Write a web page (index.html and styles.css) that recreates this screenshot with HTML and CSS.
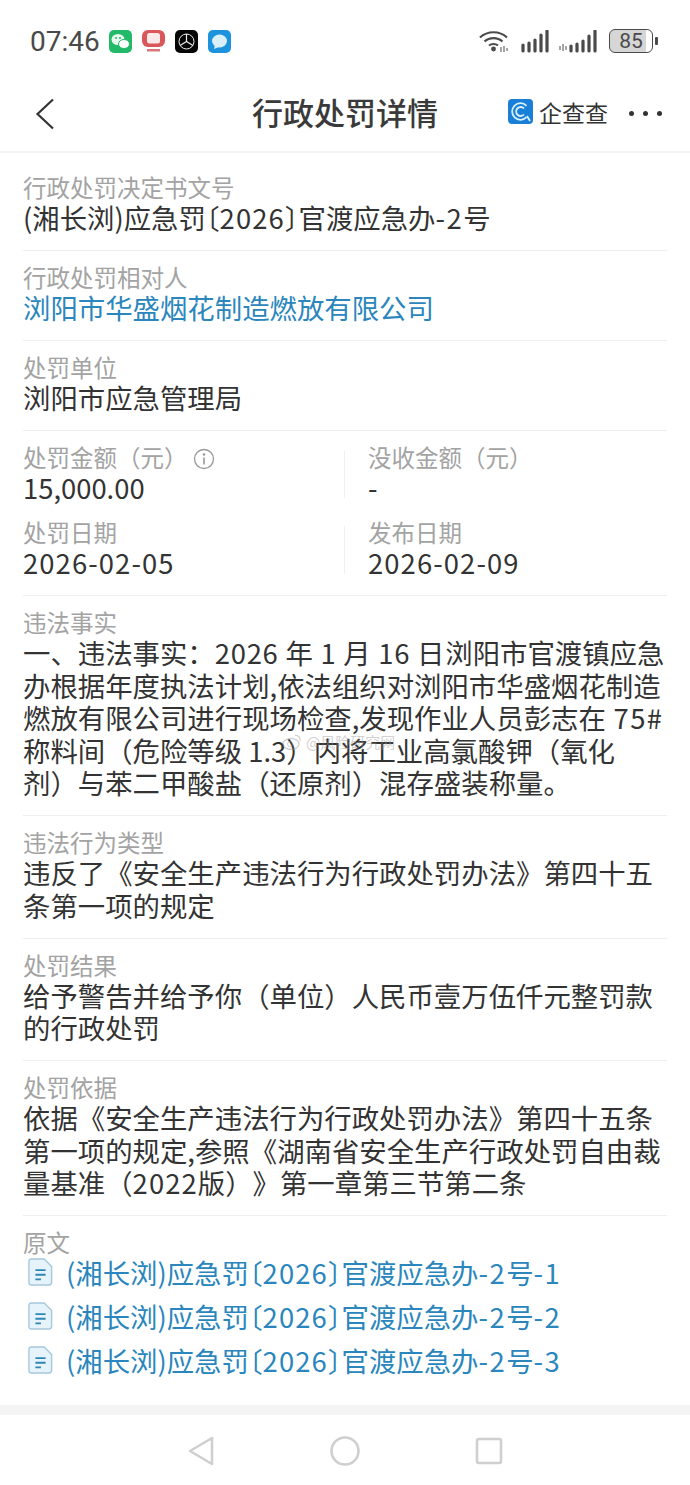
FILE: index.html
```html
<!DOCTYPE html>
<html lang="zh-CN">
<head>
  <meta charset="UTF-8">
  <meta name="viewport" content="width=device-width, initial-scale=1.0">
  <title>行政处罚详情</title>
  <link rel="stylesheet" href="styles.css">
</head>
<body>

<div class="phone">

  <!-- status bar -->
  <div class="status-bar">
    <span class="clock">07:46</span>
    <div class="app-icons">
      <svg class="app-icon" viewBox="0 0 23 23">
        <rect width="23" height="23" rx="5" fill="#22b968"/>
        <ellipse cx="9" cy="9.500" rx="6.500" ry="5.500" fill="#e9f9ef"/>
        <ellipse cx="15" cy="14" rx="5.500" ry="4.500" fill="#ffffff" stroke="#22b968"/>
        <circle cx="7" cy="8" r="1" fill="#22b968"/>
        <circle cx="11" cy="8" r="1" fill="#22b968"/>
      </svg>
      <svg class="app-icon" viewBox="0 0 23 23">
        <rect x="0" y="0" width="23" height="17" rx="6" fill="#d9565a"/>
        <rect x="5" y="3" width="13" height="10.500" rx="2.500" fill="#fbe9e9"/>
        <rect x="5" y="19" width="13" height="2.500" fill="#d9787a"/>
      </svg>
      <svg class="app-icon" viewBox="0 0 23 23">
        <rect width="23" height="23" rx="5" fill="#050505"/>
        <circle cx="11.500" cy="11.500" r="7.500" fill="none" stroke="#eee" stroke-width="1"/>
        <path d="M11.500 4v7.500M11.500 11.500l-6.500 4M11.500 11.500l6.500 4" stroke="#eee" stroke-width="1.200"/>
      </svg>
      <svg class="app-icon" viewBox="0 0 23 23">
        <rect width="23" height="23" rx="5" fill="#1d93de"/>
        <ellipse cx="11.500" cy="11" rx="7.500" ry="6.500" fill="#d9f0fb"/>
        <path d="M7 15l-1 4 5-2z" fill="#d9f0fb"/>
      </svg>
    </div>
    <div class="status-right">
      <svg class="wifi" viewBox="0 0 30 24">
        <path d="M1 8.500C8.500 1.500 20.500 1.500 28 8.500M5.500 12.500C10.500 8 18.500 8 23.500 12.500M10 16.500C12.500 14.500 16.500 14.500 19 16.500" fill="none" stroke="#4a4a4a" stroke-width="2.200"/>
        <circle cx="14.500" cy="20" r="2.400" fill="#4a4a4a"/>
        <path d="M22 18v5M25 17v6M28 19v3" stroke="#4a4a4a" stroke-width="1"/>
      </svg>
      <svg class="signal" viewBox="0 0 29 23">
        <path d="M2 15v6M8 13v8M14 10v11M20 5v16M26 1v20" stroke="#4a4a4a" stroke-width="3.200" stroke-linecap="round"/>
      </svg>
      <svg class="signal-wide" viewBox="0 0 40 23">
        <path d="M1 16v4M4 14v7M7 16v4" stroke="#4a4a4a" stroke-width="1"/>
        <path d="M12 16v5M18 14v7M24 11v10M30 6v15M36 1v20" stroke="#4a4a4a" stroke-width="3.200" stroke-linecap="round"/>
      </svg>
      <div class="battery">
        <div class="battery-body"><span>85</span></div>
        <div class="battery-tip"></div>
      </div>
    </div>
  </div>

  <!-- title bar -->
  <div class="title-bar">
    <svg class="back" viewBox="0 0 20 32">
      <path d="M18 1.500L2.500 16 18 30.500" fill="none" stroke="#333" stroke-width="2.200"/>
    </svg>
    <h1>行政处罚详情</h1>
    <div class="brand">
      <svg class="brand-logo" viewBox="0 0 25 25">
        <rect width="25" height="25" rx="4" fill="#1a7fd6"/>
        <path d="M18.500 6.800A8.300 8.300 0 1 0 18.500 18.200" fill="none" stroke="#d6f1fb" stroke-width="1.800"/>
        <path d="M16 9.500A4.500 4.500 0 1 0 16 15.500" fill="none" stroke="#d6f1fb" stroke-width="1.800"/>
        <path d="M19 17l3 5" stroke="#d6f1fb" stroke-width="1.800"/>
      </svg>
      <span class="brand-name">企查查</span>
    </div>
    <div class="more"><i></i><i></i><i></i></div>
  </div>

  <div class="content">

    <div class="row">
      <div class="label">行政处罚决定书文号</div>
      <div class="value">(湘长浏)应急罚<span class="bracket">〔</span><span class="num">2026</span><span class="bracket">〕</span>官渡应急办<span class="dash">-2</span>号</div>
    </div>

    <div class="row">
      <div class="label">行政处罚相对人</div>
      <div class="value link">浏阳市华盛烟花制造燃放有限公司</div>
    </div>

    <div class="row">
      <div class="label">处罚单位</div>
      <div class="value">浏阳市应急管理局</div>
    </div>

    <div class="row stats">
      <div class="stat">
        <div class="label">处罚金额（元）
          <svg class="info" viewBox="0 0 22 22">
            <circle cx="11" cy="11" r="9.500" fill="none" stroke="#999" stroke-width="1.300"/>
            <circle cx="11" cy="6.500" r="1.300" fill="#999"/>
            <path d="M11 9.500v7" stroke="#999" stroke-width="1.600"/>
          </svg>
        </div>
        <div class="value">15,000.00</div>
      </div>
      <div class="stat">
        <div class="label">没收金额（元）</div>
        <div class="value num">-</div>
      </div>
      <div class="stat">
        <div class="label">处罚日期</div>
        <div class="value num">2026-02-05</div>
      </div>
      <div class="stat">
        <div class="label">发布日期</div>
        <div class="value num">2026-02-09</div>
      </div>
    </div>

    <div class="row">
      <div class="label">违法事实</div>
      <div class="value">一、违法事实：<span class="date">2026 年 1 月 16 日</span>浏阳市官渡镇应急<br>办根据年度执法计划,依法组织对浏阳市华盛烟花制造<br>燃放有限公司进行现场检查,发现作业人员彭志在<span class="code"> 75#</span><br>称料间（危险等级 1.3）内将工业高氯酸钾（氧化<br>剂）与苯二甲酸盐（还原剂）混存盛装称量。</div>
      <div class="watermark">
        <svg class="weibo" viewBox="0 0 20 16">
          <ellipse cx="9" cy="10" rx="8" ry="5.500" fill="none" stroke="currentColor" stroke-width="1.300"/>
          <circle cx="8" cy="10" r="2.500" fill="none" stroke="currentColor"/>
          <path d="M13 1.500c3-.5 6 2 5 5.500" fill="none" stroke="currentColor" stroke-width="1.300"/>
        </svg>
        <span>@风险研究网</span>
      </div>
    </div>

    <div class="row">
      <div class="label">违法行为类型</div>
      <div class="value">违反了《安全生产违法行为行政处罚办法》第四十五<br>条第一项的规定</div>
    </div>

    <div class="row">
      <div class="label">处罚结果</div>
      <div class="value">给予警告并给予你（单位）人民币壹万伍仟元整罚款<br>的行政处罚</div>
    </div>

    <div class="row">
      <div class="label">处罚依据</div>
      <div class="value">依据《安全生产违法行为行政处罚办法》第四十五条<br>第一项的规定,参照《湖南省安全生产行政处罚自由裁<br>量基准（<span class="num">2022</span>版）》第一章第三节第二条</div>
    </div>

    <div class="row last">
      <div class="label">原文</div>
      <div class="docs">
        <div class="doc">
          <svg class="doc-icon" viewBox="0 0 27 30">
            <path d="M3.500 1h14l8 8v17a3 3 0 0 1-3 3h-19a2.500 2.500 0 0 1-2.500-2.500v-23a2.500 2.500 0 0 1 2.500-2.500z" fill="#e6f3fa" stroke="#a6c8dc" stroke-width="1.500"/>
            <path d="M8 13h11M8 18h11M8 23h6" stroke="#2f86b5" stroke-width="2"/>
          </svg>
          <span>(湘长浏)应急罚<span class="bracket">〔</span><span class="num">2026</span><span class="bracket">〕</span>官渡应急办<span class="dash">-2</span>号<span class="dash">-1</span></span>
        </div>
        <div class="doc">
          <svg class="doc-icon" viewBox="0 0 27 30">
            <path d="M3.500 1h14l8 8v17a3 3 0 0 1-3 3h-19a2.500 2.500 0 0 1-2.500-2.500v-23a2.500 2.500 0 0 1 2.500-2.500z" fill="#e6f3fa" stroke="#a6c8dc" stroke-width="1.500"/>
            <path d="M8 13h11M8 18h11M8 23h6" stroke="#2f86b5" stroke-width="2"/>
          </svg>
          <span>(湘长浏)应急罚<span class="bracket">〔</span><span class="num">2026</span><span class="bracket">〕</span>官渡应急办<span class="dash">-2</span>号<span class="dash">-2</span></span>
        </div>
        <div class="doc">
          <svg class="doc-icon" viewBox="0 0 27 30">
            <path d="M3.500 1h14l8 8v17a3 3 0 0 1-3 3h-19a2.500 2.500 0 0 1-2.500-2.500v-23a2.500 2.500 0 0 1 2.500-2.500z" fill="#e6f3fa" stroke="#a6c8dc" stroke-width="1.500"/>
            <path d="M8 13h11M8 18h11M8 23h6" stroke="#2f86b5" stroke-width="2"/>
          </svg>
          <span>(湘长浏)应急罚<span class="bracket">〔</span><span class="num">2026</span><span class="bracket">〕</span>官渡应急办<span class="dash">-2</span>号<span class="dash">-3</span></span>
        </div>
      </div>
    </div>

  </div>

  <div class="band"></div>

  <!-- system navigation -->
  <div class="nav-bar">
    <svg class="nav-icon" viewBox="0 0 30 32">
      <path d="M4 16L26 3v26z" fill="none" stroke="#cfcfcf" stroke-width="2.600" stroke-linejoin="round"/>
    </svg>
    <svg class="nav-icon" viewBox="0 0 30 32">
      <circle cx="15" cy="16" r="13.500" fill="none" stroke="#cfcfcf" stroke-width="2.600"/>
    </svg>
    <svg class="nav-icon" viewBox="0 0 30 32">
      <rect x="3" y="4" width="24" height="24" rx="2" fill="none" stroke="#cfcfcf" stroke-width="2.600"/>
    </svg>
  </div>

</div>

</body>
</html>
```

FILE: styles.css
```css
body {
  margin: 0;
  background-color: #fff;
  color: #333;
  font-family: "Noto Sans CJK SC", "Noto Sans", sans-serif;
}

.phone {
  width: 690px;
  height: 1485px;
  overflow: hidden;
}

/* status bar */
.status-bar {
  height: 76px;
  box-sizing: border-box;
  padding: 24px 32px 0 30px;
  display: flex;
  align-items: flex-start;
}
.clock {
  font-family: Roboto, "Open Sans", sans-serif;
  font-size: 28px;
  line-height: 34px;
  margin-top: 1px;
  color: #4a4a4a;
}
.app-icons {
  display: flex;
  gap: 10px;
  margin: 6px 0 0 9px;
}
.app-icon {
  width: 23px;
  height: 23px;
}
.status-right {
  margin-left: auto;
  display: flex;
  align-items: center;
  margin-top: 5px;
  height: 24px;
}
.wifi {
  width: 30px;
  height: 24px;
  margin-right: 12px;
}
.signal {
  width: 29px;
  height: 23px;
  margin-right: 9px;
}
.signal-wide {
  width: 40px;
  height: 23px;
  margin-right: 10px;
}
.battery {
  display: flex;
  align-items: center;
}
.battery-body {
  width: 42px;
  height: 22px;
  border: 1.500px solid #4a4a4a;
  border-radius: 6px;
  background: linear-gradient(to right, #d6d6d6 85%, #fff 85%);
  text-align: center;
  font-family: Roboto, sans-serif;
  font-size: 21px;
  line-height: 22px;
  color: #4a4a4a;
}
.battery-tip {
  width: 3px;
  height: 8px;
  margin-left: 2px;
  border-radius: 1px;
  background-color: #4a4a4a;
}

/* title bar */
.title-bar {
  height: 75px;
  display: flex;
  align-items: center;
  padding: 0 28px 0 35px;
  border-bottom: 2px solid #f4f4f4;
}
.back {
  width: 20px;
  height: 32px;
}
.title-bar h1 {
  margin: 0 0 4px 197px;
  font-size: 31px;
  font-weight: 500;
  color: #3a3a3a;
  white-space: nowrap;
}
.brand {
  margin: 0 0 4px auto;
  display: flex;
  align-items: center;
  gap: 6px;
}
.brand-logo {
  width: 25px;
  height: 25px;
}
.brand-name {
  font-size: 23px;
  line-height: 26px;
  color: #333;
}
.more {
  display: flex;
  gap: 9px;
  margin-left: 21px;
}
.more i {
  width: 5px;
  height: 5px;
  border-radius: 50%;
  background-color: #333;
}

/* detail rows */
.content {
  padding: 7.500px 23px 0;
}
.row {
  position: relative;
  padding: 11px 0 16.500px;
  border-bottom: 1px solid #eee;
}
.row.last {
  border-bottom: none;
  padding-bottom: 0;
}
.label {
  font-size: 23.500px;
  line-height: 31px;
  color: #a3a3a3;
  white-space: nowrap;
}
.value {
  margin-top: -2px;
  font-size: 27.400px;
  line-height: 32.500px;
  color: #333;
  white-space: nowrap;
  text-spacing-trim: space-all;
}
.link {
  color: #2a86bd;
}
.info {
  width: 22px;
  height: 22px;
  vertical-align: -3px;
}

.stats {
  display: grid;
  grid-template-columns: 345px 1fr;
  row-gap: 14px;
}
.stat {
  position: relative;
}
.stat:nth-child(even)::before {
  content: "";
  position: absolute;
  left: -24px;
  top: 9px;
  bottom: 5px;
  width: 1px;
  background-color: #f0f0f0;
}
.num {
  letter-spacing: 1.100px;
}
.date {
  letter-spacing: 0.750px;
}
.code {
  letter-spacing: 1.500px;
}
.dash {
  letter-spacing: 1.500px;
}
.bracket {
  font-feature-settings: "halt";
}

.watermark {
  position: absolute;
  left: 259px;
  top: 136px;
  display: flex;
  align-items: center;
  gap: 4px;
  font-size: 15px;
  line-height: 20px;
  color: rgba(150, 150, 150, 0.45);
  white-space: nowrap;
}
.weibo {
  width: 20px;
  height: 16px;
}

.docs {
  display: flex;
  flex-direction: column;
  gap: 11px;
  margin-top: -3px;
}
.doc {
  display: flex;
  align-items: center;
  gap: 13px;
  height: 33px;
  padding-left: 5px;
  font-size: 27.400px;
  color: #2a86bd;
  white-space: nowrap;
}
.doc-icon {
  width: 25px;
  height: 28px;
}

.band {
  height: 10px;
  margin-top: 28.500px;
  background-color: #f4f4f4;
}

/* system navigation */
.nav-bar {
  display: flex;
  justify-content: center;
  gap: 114px;
  padding-top: 20px;
}
.nav-icon {
  width: 30px;
  height: 32px;
}
```
